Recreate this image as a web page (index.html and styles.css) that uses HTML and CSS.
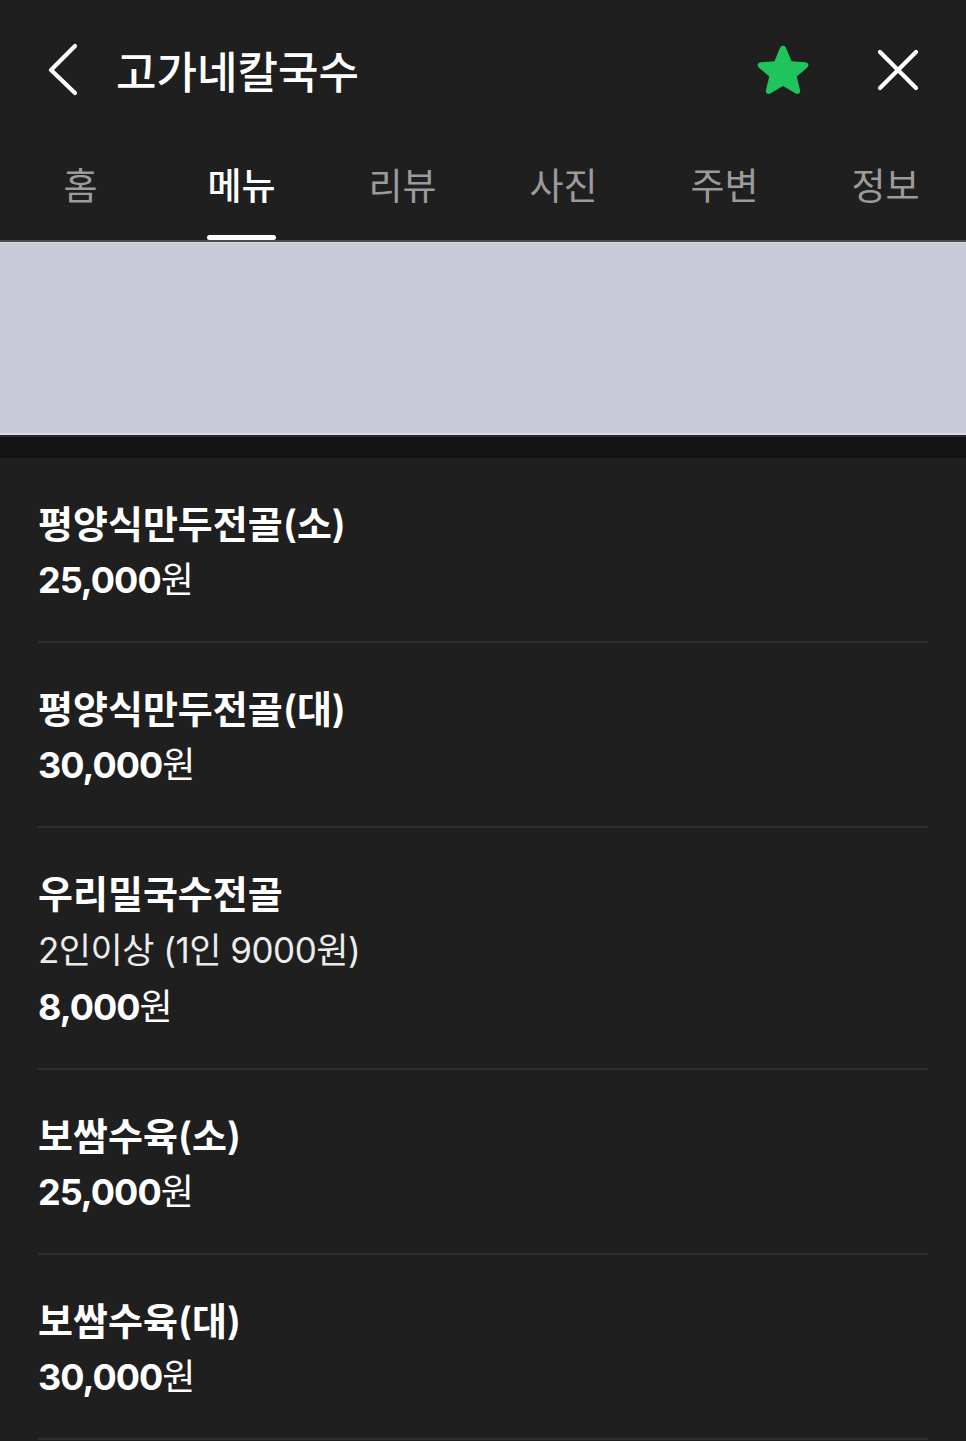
FILE: index.html
```html
<!DOCTYPE html>
<html lang="ko">

<head>
  <meta charset="UTF-8">
  <meta name="viewport" content="width=device-width, initial-scale=1.0">
  <title>고가네칼국수 - 메뉴</title>
  <link rel="stylesheet" href="styles.css">
</head>

<body>
  <header class="header">
    <div class="topbar">
      <button class="icon-btn back" aria-label="뒤로">
        <svg width="34" height="54" viewBox="0 0 34 54">
          <polyline points="28,3 4,27 28,50" fill="none" stroke="#fff" stroke-width="4.2"
            stroke-linecap="round" stroke-linejoin="round" />
        </svg>
      </button>
      <h1 class="title">고가네칼국수</h1>
      <button class="icon-btn star" aria-label="즐겨찾기">
        <svg width="58" height="54" viewBox="3 1 50 48">
          <path d="M28 3.5 C29.6 3.5 30.4 4.6 31 6 L35.6 17.2 L47.6 18.1 C50.6 18.3 51.6 21 49.4 22.9 L40.2 30.8 L43.1 42.6 C43.8 45.5 41.4 47.3 38.9 45.7 L28 39.2 L17.1 45.7 C14.6 47.3 12.2 45.5 12.9 42.6 L15.8 30.8 L6.6 22.9 C4.4 21 5.4 18.3 8.4 18.1 L20.4 17.2 L25 6 C25.6 4.6 26.4 3.5 28 3.5 Z"
            fill="#1fc45c" />
        </svg>
      </button>
      <button class="icon-btn close" aria-label="닫기">
        <svg width="44" height="44" viewBox="0 0 44 44">
          <path d="M4 4 L40 40 M40 4 L4 40" stroke="#fff" stroke-width="4.2" stroke-linecap="round" />
        </svg>
      </button>
    </div>

    <nav class="tabs">
      <a class="tab"><span>홈</span></a>
      <a class="tab active"><span>메뉴</span></a>
      <a class="tab"><span>리뷰</span></a>
      <a class="tab"><span>사진</span></a>
      <a class="tab"><span>주변</span></a>
      <a class="tab"><span>정보</span></a>
    </nav>
  </header>

  <div class="banner"></div>
  <div class="gap-band"></div>

  <ul class="menu-list">
    <li class="menu-item">
      <div class="name">평양식만두전골(소)</div>
      <div class="price"><b>25,000</b>원</div>
    </li>
    <li class="menu-item">
      <div class="name">평양식만두전골(대)</div>
      <div class="price"><b>30,000</b>원</div>
    </li>
    <li class="menu-item">
      <div class="name">우리밀국수전골</div>
      <div class="desc">2인이상 (1인 9000원)</div>
      <div class="price"><b>8,000</b>원</div>
    </li>
    <li class="menu-item">
      <div class="name">보쌈수육(소)</div>
      <div class="price"><b>25,000</b>원</div>
    </li>
    <li class="menu-item">
      <div class="name">보쌈수육(대)</div>
      <div class="price"><b>30,000</b>원</div>
    </li>
  </ul>
</body>

</html>
```

FILE: styles.css
```css
* {
  box-sizing: border-box;
}

body {
  margin: 0;
  background-color: #1f1f1f;
  color: #fff;
  font-family: Inter, "Noto Sans CJK KR", sans-serif;
  overflow: hidden;
}

/* header */

.header {
  background-color: #1f1f1f;
}

.topbar {
  height: 140px;
  display: flex;
  align-items: center;
  padding: 0 46px 0 47px;
}

.icon-btn {
  background: none;
  border: none;
  padding: 0;
  display: flex;
  cursor: pointer;
}

.back {
  margin-right: 35px;
}

.title {
  flex: 1;
  margin: 0;
  font-family: "Noto Sans CJK KR", sans-serif;
  font-size: 44px;
  font-weight: 500;
  line-height: 1;
}

.star {
  margin-right: 64px;
}

.tabs {
  display: grid;
  grid-template-columns: repeat(6, 1fr);
  height: 102px;
  border-bottom: 2px solid #4b4b4e;
}

.tab {
  display: flex;
  justify-content: center;
  padding-top: 25px;
  font-family: "Noto Sans CJK KR", sans-serif;
  font-size: 37px;
  color: #9b9b9b;
}

.tab span {
  display: flex;
  flex-direction: column;
  align-items: stretch;
  line-height: 38px;
}

.tab.active {
  color: #fff;
  font-weight: 500;
}

.tab.active span::after {
  content: "";
  display: block;
  height: 5px;
  margin-top: 32px;
  border-radius: 3px;
  background-color: #fff;
}

/* banner */

.banner {
  height: 193px;
  background-color: #c8cad8;
  border-top: 1px solid #d8d9e4;
  border-bottom: 2px solid #dcdbe6;
}

.gap-band {
  height: 23px;
  background-color: #141414;
  border-top: 2px solid #2b2b2f;
}

/* menu list */

.menu-list {
  list-style: none;
  margin: 0;
  padding: 0 38px;
}

.menu-item {
  padding: 38px 0 33px;
  border-bottom: 2px solid #2e2e2e;
}

.name {
  font-size: 38px;
  font-weight: 600;
  line-height: 56px;
}

.desc {
  font-size: 35px;
  line-height: 57px;
  color: #ececec;
  letter-spacing: -0.5px;
}

.price {
  font-size: 36px;
  line-height: 56px;
}

.price b {
  font-weight: 700;
  letter-spacing: -1px;
}
```
